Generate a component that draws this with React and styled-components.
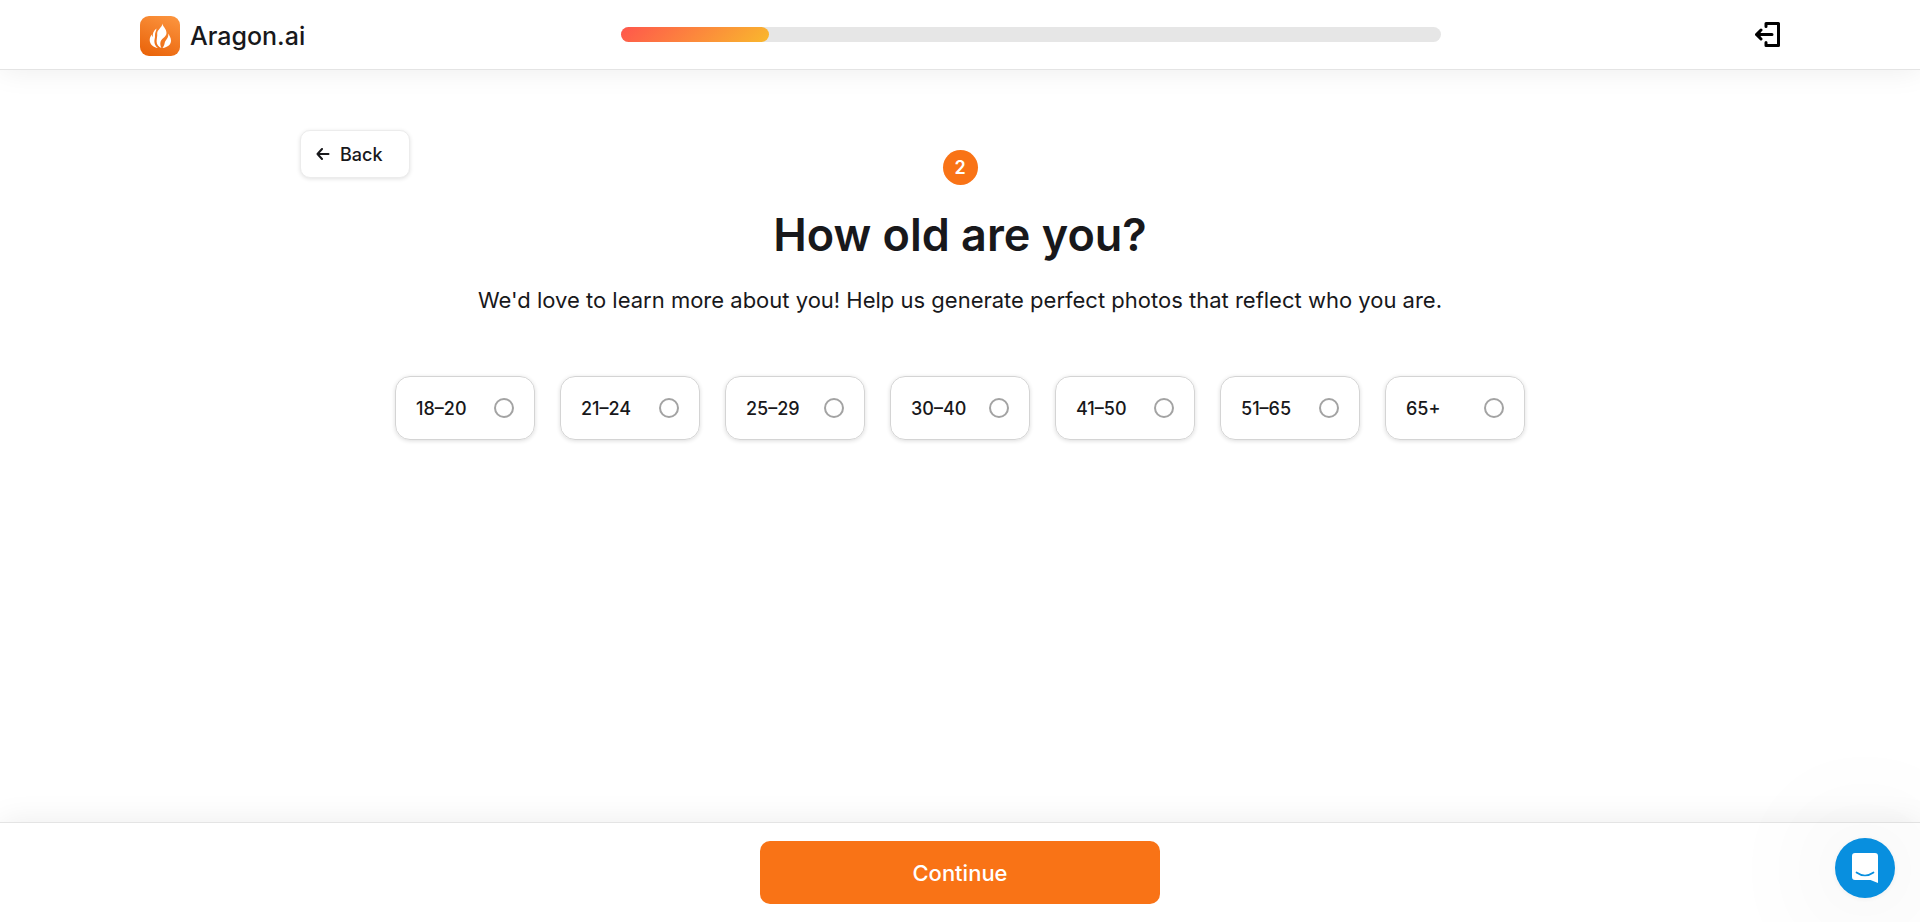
import React, { useState } from "react";
import styled, { createGlobalStyle } from "styled-components";

const GlobalStyle = createGlobalStyle`
  *, *::before, *::after { box-sizing: border-box; }
  body {
    margin: 0;
    background: #fff;
    color: #18181b;
    font-family: Inter, "Liberation Sans", sans-serif;
  }
  button, input { font: inherit; color: inherit; }
`;

const Page = styled.div`
  min-height: 100vh;
  display: flex;
  flex-direction: column;
`;

const Header = styled.header`
  height: 70px;
  padding: 0 140px;
  display: grid;
  grid-template-columns: 1fr 2fr 1fr;
  align-items: center;
  border-bottom: 1px solid #e4e4e4;
  box-shadow: 0 0 30px rgba(0, 0, 0, 0.08);
`;

const Brand = styled.a`
  display: flex;
  align-items: center;
  gap: 10px;
  padding-top: 2px;
  color: inherit;
  font-size: 25px;
  font-weight: 500;
  line-height: 30px;
  text-decoration: none;
`;

const Track = styled.div`
  height: 15px;
  margin: 0 -71px 0 71px;
  border-radius: 8px;
  background: #e6e6e6;
`;

const Fill = styled.div`
  height: 100%;
  border-radius: inherit;
  background: linear-gradient(135deg, #ff564c, #f9b82d);
`;

const ExitButton = styled.button`
  display: flex;
  justify-self: end;
  padding: 0;
  border: 0;
  background: none;
  color: #000;
  cursor: pointer;
`;

const Main = styled.main`
  flex: 1;
  width: 100%;
  max-width: 1320px;
  margin: 0 auto;
  padding: 60px 0;
`;

const Intro = styled.div`
  display: grid;
  grid-template-columns: 1fr auto 1fr;
  align-items: start;
`;

const BackButton = styled.button`
  justify-self: start;
  display: flex;
  align-items: center;
  gap: 10px;
  height: 48px;
  padding: 0 26px 0 15px;
  border: 1px solid #ececec;
  border-radius: 10px;
  background: #fff;
  box-shadow: 0 1px 4px rgba(0, 0, 0, 0.12);
  font-size: 18px;
  font-weight: 500;
  cursor: pointer;
`;

const Question = styled.div`
  display: flex;
  flex-direction: column;
  align-items: center;
  padding-top: 20px;
  text-align: center;
`;

const Step = styled.span`
  width: 35px;
  height: 35px;
  border-radius: 50%;
  background: #f97316;
  color: #fff;
  font-size: 18px;
  font-weight: 600;
  line-height: 35px;
`;

const Title = styled.h1`
  margin: 20px 0 0;
  font-size: 45px;
  font-weight: 600;
  line-height: 60px;
`;

const Subtitle = styled.p`
  margin: 20px 0 0;
  font-size: 22px;
  line-height: 30px;
`;

const Options = styled.fieldset`
  display: flex;
  flex-wrap: wrap;
  justify-content: center;
  gap: 25px;
  margin: 61px 0 0;
  padding: 0;
  border: 0;
`;

const Option = styled.label`
  display: flex;
  align-items: center;
  justify-content: space-between;
  width: 140px;
  height: 64px;
  padding: 0 20px;
  border: 1px solid #d4d4d4;
  border-radius: 15px;
  box-shadow: 0 1px 4px rgba(0, 0, 0, 0.14);
  font-size: 18px;
  font-weight: 500;
  cursor: pointer;
`;

const Radio = styled.input`
  appearance: none;
  width: 20px;
  height: 20px;
  margin: 0;
  border: 2px solid #a3a3a3;
  border-radius: 50%;
  cursor: pointer;

  &:checked { border: 6px solid #f97316; }
`;

const Footer = styled.footer`
  display: flex;
  justify-content: center;
  padding: 18px 20px;
  border-top: 1px solid #e4e4e4;
  background: #fff;
  box-shadow: 0 0 30px rgba(0, 0, 0, 0.08);
`;

const ContinueButton = styled.button`
  width: 400px;
  height: 63px;
  border: 0;
  border-radius: 10px;
  background: #f97316;
  color: #fff;
  font-size: 22px;
  font-weight: 500;
  cursor: pointer;
`;

const ChatButton = styled.button`
  position: fixed;
  right: 25px;
  bottom: 24px;
  display: grid;
  place-items: center;
  width: 60px;
  height: 60px;
  padding: 0;
  border: 0;
  border-radius: 50%;
  background: #088fdf;
  box-shadow: 0 1px 6px rgba(0, 0, 0, 0.06), 0 2px 120px rgba(0, 0, 0, 0.16);
  cursor: pointer;
`;

const LogoIcon = () => (
  <svg width="40" height="40" viewBox="0 0 40 40" aria-hidden="true">
    <defs>
      <linearGradient id="logo" x1="0.7" y1="0" x2="0.3" y2="1">
        <stop offset="0" stopColor="#fb923c" />
        <stop offset="1" stopColor="#ea650c" />
      </linearGradient>
    </defs>
    <rect width="40" height="40" rx="9" fill="url(#logo)" />
    <g fill="#fff">
      <path d="M22.4 7.5C22.7 10.5 26.5 12.700 26.5 17C26.5 21.500 20.300 22.300 20.300 27.500C20.300 29.500 21 31 21.500 32C18.500 31 16.600 28.500 16.600 25.500C16.600 22.500 17.500 20.500 17.200 17.500C17.200 13.500 22.300 11.500 22.400 7.500Z" />
      <path d="M16.500 12.500C16.100 15.500 14.800 16.800 15 19.500C15.200 22 14.200 23.500 14.400 26C14.600 28.800 16 30.700 18 32C13 31.500 9.700 28 9.700 24C9.700 21.500 10.700 20 11.700 18.500C11.800 19.800 12.200 20.500 12.700 21C12.500 17.500 13.500 14.500 16.500 12.500Z" />
      <path d="M28.200 17.500C29.300 19.500 31 21.500 31 24.500C31 28.500 28 31.300 22.500 32C24.500 29.500 24.300 28.500 24.800 26.500C25.800 24 29 21.500 28.200 17.500Z" />
    </g>
  </svg>
);

const ExitIcon = () => (
  <svg width="25" height="25" viewBox="0 0 25 25" fill="none" stroke="currentColor" strokeWidth="3" strokeLinecap="round" strokeLinejoin="round" aria-hidden="true">
    <path d="M11 4.500V1.500H23.500V23.500H11V20.500M17 12.500H2M6 8L1.500 12.500L6 17" />
    <path d="M1 12.500L5 9.500V15.500Z" fill="currentColor" strokeWidth="1" />
  </svg>
);

const BackIcon = () => (
  <svg width="14" height="12" viewBox="0 0 14 12" fill="none" stroke="currentColor" strokeWidth="2" strokeLinecap="round" strokeLinejoin="round" aria-hidden="true">
    <path d="M12.500 6H1.500M6 1L1.500 6L6 11" />
  </svg>
);

const ChatIcon = () => (
  <svg width="28" height="32" viewBox="0 0 28 32" aria-hidden="true">
    <path d="M4 1H24Q27 1 27 4V31L19.500 28H4Q1 28 1 25V4Q1 1 4 1Z" fill="#fff" />
    <path d="M5.500 20.500Q14 26.500 22.500 20.500" fill="none" stroke="#088fdf" strokeWidth="1.700" strokeLinecap="round" />
  </svg>
);

const AGES = ["18–20", "21–24", "25–29", "30–40", "41–50", "51–65", "65+"];
const PROGRESS = 18;

export default function App() {
  const [age, setAge] = useState("");

  return (
    <Page>
      <GlobalStyle />
      <Header>
        <Brand href="#">
          <LogoIcon />
          Aragon.ai
        </Brand>
        <Track role="progressbar" aria-label="Progress" aria-valuenow={PROGRESS} aria-valuemin={0} aria-valuemax={100}>
          <Fill style={{ width: `${PROGRESS}%` }} />
        </Track>
        <ExitButton type="button" aria-label="Exit">
          <ExitIcon />
        </ExitButton>
      </Header>
      <Main>
        <Intro>
          <BackButton type="button">
            <BackIcon />
            Back
          </BackButton>
          <Question>
            <Step>2</Step>
            <Title id="question">How old are you?</Title>
            <Subtitle>We'd love to learn more about you! Help us generate perfect photos that reflect who you are.</Subtitle>
          </Question>
        </Intro>
        <Options aria-labelledby="question">
          {AGES.map((label) => (
            <Option key={label}>
              {label}
              <Radio type="radio" name="age" value={label} checked={age === label} onChange={() => setAge(label)} />
            </Option>
          ))}
        </Options>
      </Main>
      <Footer>
        <ContinueButton type="button">Continue</ContinueButton>
      </Footer>
      <ChatButton type="button" aria-label="Open chat">
        <ChatIcon />
      </ChatButton>
    </Page>
  );
}
